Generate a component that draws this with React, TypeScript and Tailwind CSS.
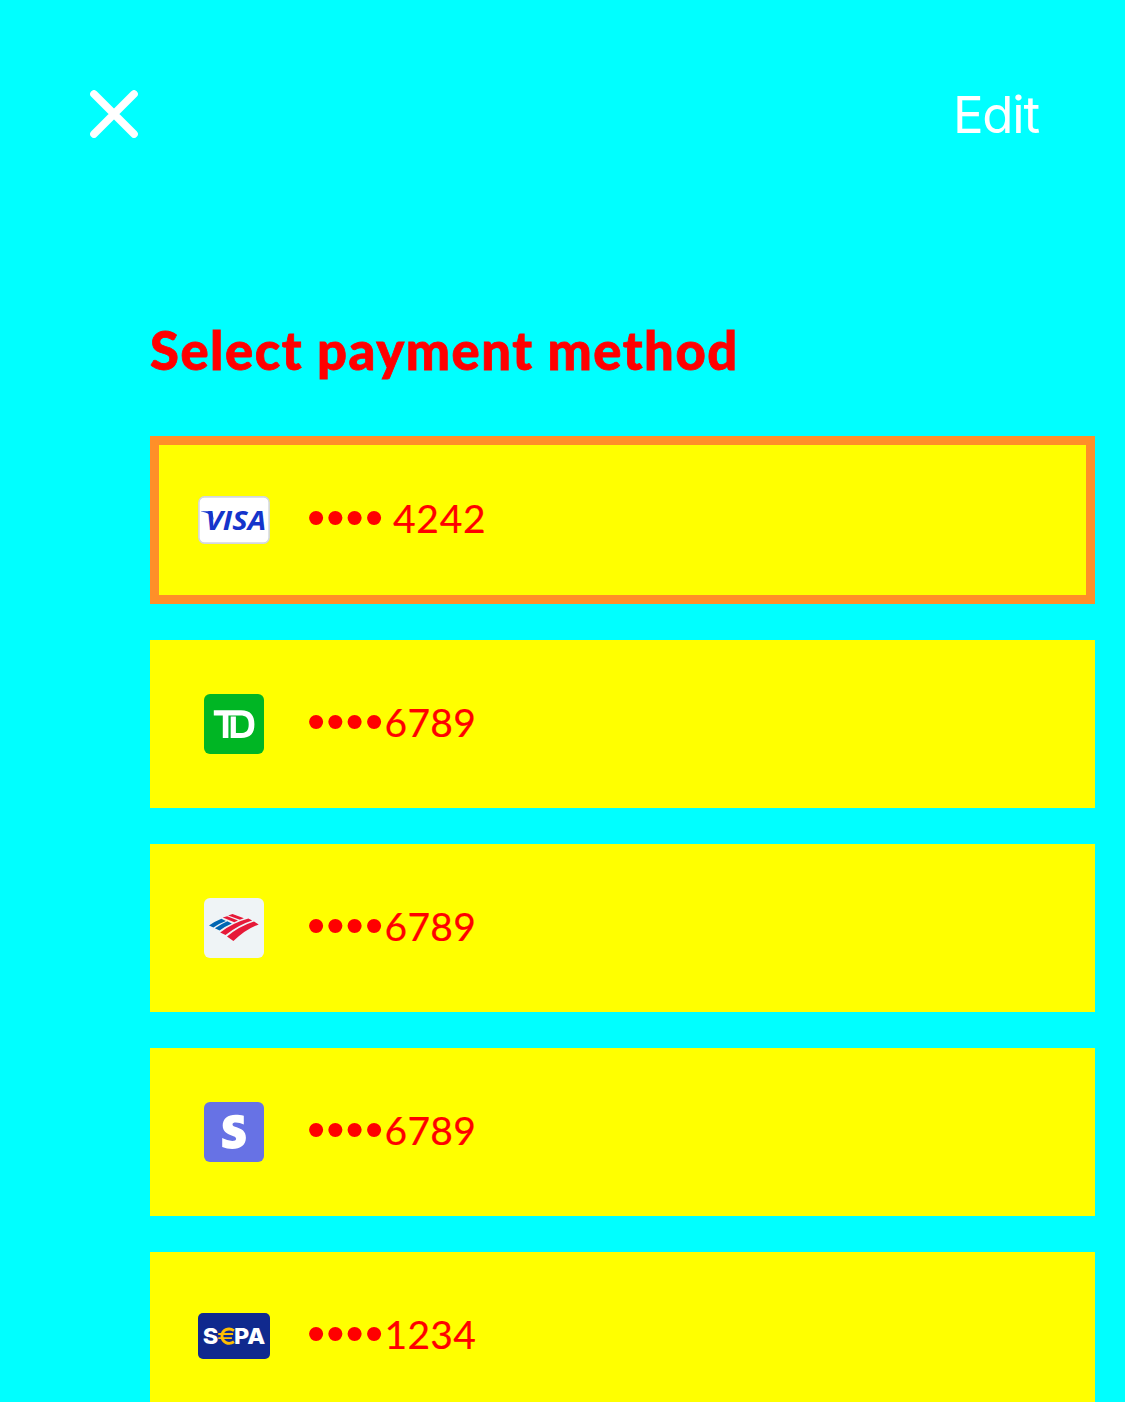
import type { ReactNode } from "react";

function VisaLogo() {
  return (
    <svg width="72" height="48" viewBox="0 0 72 48" role="img" aria-label="Visa">
      <rect x="0.9" y="0.9" width="70.2" height="46.2" rx="5.5" fill="#fff" stroke="#d3d7de" strokeWidth="1.6" />
      <path d="M3 15.2h8.7c1.6 0 2.5.8 2.8 2.2l1.3 6.9C13.6 18.8 9.3 16.7 3 15.6Z" fill="#1434cb" />
      <text x="7.6" y="33.9" textLength="60.5" lengthAdjust="spacingAndGlyphs" fill="#1434cb" className="font-['Open_Sans'] text-[26.5px] font-bold italic">VISA</text>
    </svg>
  );
}

function TdLogo() {
  return (
    <svg width="60" height="60" viewBox="0 0 60 60" role="img" aria-label="TD">
      <rect width="60" height="60" rx="6" fill="#00b624" />
      <path fill="#fff" fillRule="evenodd" d="M9.8 16.2H37c9.6 0 13.4 5.1 13.4 14S46.6 43.9 37 43.9H26.7V22.4h5.2v16.7H36c6.1 0 8.7-2.4 8.7-8.9s-2.6-8.8-8.7-8.8H24.4v22.5h-5.6V21.4h-9Z" />
    </svg>
  );
}

function BankOfAmericaLogo() {
  return (
    <svg width="60" height="60" viewBox="0 0 60 60" role="img" aria-label="Bank of America">
      <rect width="60" height="60" rx="6" fill="#eff4f6" />
      <g fill="#0066b2">
        <path d="M5 27.4Q11 23.4 17.4 20.8L22 23Q15.4 25.4 9.4 29.4Z" />
        <path d="M10.9 30.2Q17 26 23.3 23.2l4.6 2.4Q21.8 28.2 15.6 32.5Z" />
      </g>
      <g fill="#e61938">
        <path d="m18.7 19.5 4.5-1.3 10.8 4.3-3.7 1.8Z" />
        <path d="m24.2 17.4 4.3-1.4 11.4 4.2-4 1.6Z" />
        <path d="M16.2 34.5Q29 24.8 44.4 20.6l3.8 1.8Q34 26.9 21.5 37Z" />
        <path d="M23 38.4Q35.4 28 50 23.4l4.7 3Q41.5 31 29.4 43.1Z" />
      </g>
    </svg>
  );
}

function StripeLogo() {
  return (
    <svg width="60" height="60" viewBox="0 0 60 60" role="img" aria-label="Stripe">
      <rect width="60" height="60" rx="6" fill="#6772e5" />
      <path fill="#fff" d="M39.8 13.8v8.7c-2.5-1.2-5.4-2-7.9-2-2.1 0-3.4.6-3.4 1.9 0 1.4 1.9 2 4.2 2.9 4.8 1.7 9.2 3.8 9.2 10.4 0 7.4-5.3 11.2-13.7 11.2-3.4 0-6.9-.7-10-2v-8.8c3 1.6 6.9 2.8 10.1 2.8 2.4 0 3.8-.7 3.8-2.2 0-1.6-1.8-2.2-4.5-3.2-4.9-1.8-8.9-4-8.9-9.9 0-7 5.3-10.9 12.9-10.9 2.9 0 5.6.1 8.2 1.1Z" />
    </svg>
  );
}

function SepaLogo() {
  return (
    <svg width="72" height="46" viewBox="0 0 72 46" role="img" aria-label="SEPA">
      <rect width="72" height="46" rx="5" fill="#10298e" />
      <g className="font-['Inter'] text-[22px] font-extrabold">
        <text x="4.8" y="31.2" textLength="15.6" lengthAdjust="spacingAndGlyphs" fill="#fff">S</text>
        <text x="36" y="31.2" textLength="31.2" lengthAdjust="spacingAndGlyphs" fill="#fff">PA</text>
      </g>
      <path d="M36 17.6C30.5 14 24 16.8 24 23s6.5 9.4 12 5.8" fill="none" stroke="#ffbe00" strokeWidth="2.9" />
      <path d="M20.2 21h14.9M20.2 25.1h13.7" fill="none" stroke="#ffbe00" strokeWidth="1.8" />
    </svg>
  );
}

type Method = { id: string; logo: ReactNode; digits: string; selected?: boolean };

const methods: Method[] = [
  { id: "visa", logo: <VisaLogo />, digits: "4242", selected: true },
  { id: "td", logo: <TdLogo />, digits: "6789" },
  { id: "boa", logo: <BankOfAmericaLogo />, digits: "6789" },
  { id: "stripe", logo: <StripeLogo />, digits: "6789" },
  { id: "sepa", logo: <SepaLogo />, digits: "1234" },
];

function MethodRow({ method }: { method: Method }) {
  return (
    <button
      type="button"
      className={`flex h-[168px] w-full shrink-0 items-center border-[9px] bg-[#ffff00] pl-[39px] text-left text-[#ff0000] ${
        method.selected ? "border-[#ff8f28]" : "border-[#ffff00]"
      }`}
    >
      <span className="flex w-[72px] shrink-0 justify-center">{method.logo}</span>
      <span className="mb-[6px] ml-[37px] flex h-12 items-center">
        <span className="w-[77.5px] font-['Liberation_Sans'] text-[52px] leading-[48px] tracking-[1.1px]">••••</span>
        <span
          className={`mt-px font-['Lato'] text-[39px] leading-[48px] [-webkit-text-stroke:0.2px_#ff0000] ${
            method.selected ? "ml-[8.5px] tracking-[0.7px]" : "tracking-[0.3px]"
          }`}
        >
          {method.digits}
        </span>
      </span>
    </button>
  );
}

export default function App() {
  return (
    <main className="flex h-[1402px] w-[1125px] flex-col overflow-hidden bg-[#00ffff]">
      <header className="flex h-[228px] shrink-0 items-center justify-between pr-[86px] pl-[90px]">
        <button type="button" aria-label="Close">
          <svg width="48" height="48" viewBox="0 0 48 48" fill="none" stroke="#fff" strokeWidth="7.6" strokeLinecap="round">
            <path d="M4 4l40 40M44 4 4 44" />
          </svg>
        </button>
        <button type="button" className="mt-px font-['Inter'] text-[51px] leading-[60px] tracking-[-1.2px] text-white">Edit</button>
      </header>
      <section className="flex flex-col pr-[30px] pl-[150px]">
        <h1 className="mt-[88px] h-[120px] font-['Lato'] text-[52.5px] leading-[68px] font-black tracking-[1.55px] whitespace-nowrap text-[#ff0000] [-webkit-text-stroke:0.8px_#ff0000]">
          Select payment method
        </h1>
        <div className="flex flex-col gap-9">
          {methods.map((method) => (
            <MethodRow key={method.id} method={method} />
          ))}
        </div>
      </section>
    </main>
  );
}
